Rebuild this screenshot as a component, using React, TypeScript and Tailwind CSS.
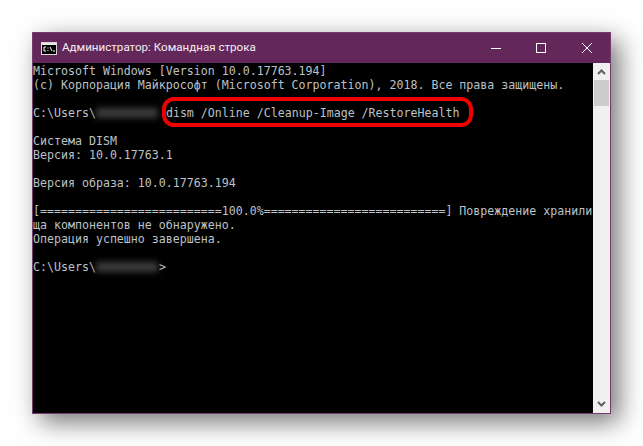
const mono = 'font-["DejaVu_Sans_Mono",monospace] text-[11.62px] leading-[14px]';

function Blur({ chars }: { chars: number }) {
  return (
    <span className={chars === 10 ? 'inline-flex w-[70px] h-[14px] items-center' : 'inline-flex w-[63px] h-[14px] items-center'}>
      <span className="block w-[62px] h-[10px] bg-[#3c3c3c] blur-[3px]" />
    </span>
  );
}

function Line({ children }: { children?: React.ReactNode }) {
  return <div className="h-[14px] whitespace-pre flex items-center">{children}</div>;
}

export default function App() {
  return (
    <div className="w-[643px] h-[446px] bg-white pt-[32px] pl-[32px] overflow-hidden">
      <div className="relative w-[579px] h-[382px] border border-[#733c6c] bg-[#632759] flex flex-col shadow-[8px_8px_24px_rgba(0,0,0,0.55)]">
        <div className="h-[30px] flex items-center text-white shrink-0">
          <svg width="16" height="13" viewBox="0 0 16 13" className="ml-[8px] mr-[5px]">
            <rect x="0.5" y="0.5" width="15" height="12" fill="#000" stroke="#d8d8d8" />
            <rect x="1" y="1" width="14" height="2" fill="#e8e8e8" />
            <path d="M5 5H3v4h2M7 5.5v1M7 8v1M9 5l2 4M12 9h2" stroke="#fff" fill="none" />
          </svg>
          <span className='font-["Roboto",sans-serif] text-[11.6px] text-[#f4eff3]'>Администратор: Командная строка</span>
          <div className="ml-auto flex items-center h-full">
            <svg width="10" height="10" viewBox="0 0 10 10" className="mr-[35px]">
              <path d="M0 5.5H10" stroke="#fff" />
            </svg>
            <svg width="10" height="10" viewBox="0 0 10 10" className="mr-[36px]">
              <rect x="0.5" y="0.5" width="9" height="9" fill="none" stroke="#fff" />
            </svg>
            <svg width="10" height="10" viewBox="0 0 10 10" className="mr-[18px]">
              <path d="M0 0L10 10M10 0L0 10" stroke="#fff" />
            </svg>
          </div>
        </div>
        <div className="flex flex-1 min-h-0">
          <div className={`flex-1 bg-black text-[#bcc2c8] pt-[1px] ${mono}`}>
            <Line>Microsoft Windows [Version 10.0.17763.194]</Line>
            <Line>(c) Корпорация Майкрософт (Microsoft Corporation), 2018. Все права защищены.</Line>
            <Line />
            <Line>
              C:\Users\<Blur chars={10} />dism /Online /Cleanup-Image /RestoreHealth
            </Line>
            <Line />
            <Line>Система DISM</Line>
            <Line>Версия: 10.0.17763.1</Line>
            <Line />
            <Line>Версия образа: 10.0.17763.194</Line>
            <Line />
            <Line>[==========================100.0%==========================] Повреждение хранили</Line>
            <Line>ща компонентов не обнаружено.</Line>
            <Line>Операция успешно завершена.</Line>
            <Line />
            <Line>
              C:\Users\<Blur chars={9} />&gt;
            </Line>
          </div>
          <div className="w-[17px] bg-[#f0f0f0] flex flex-col items-center shrink-0">
            <svg width="9" height="6" viewBox="0 0 9 6" className="mt-[6px]">
              <path d="M1 5L4.5 1.5L8 5" stroke="#606060" strokeWidth="2" fill="none" />
            </svg>
            <div className="w-[15px] h-[26px] bg-[#cdcdcd] mt-[5px]" />
            <svg width="9" height="6" viewBox="0 0 9 6" className="mt-auto mb-[6px]">
              <path d="M1 1L4.5 4.5L8 1" stroke="#606060" strokeWidth="2" fill="none" />
            </svg>
          </div>
        </div>
        <div className="absolute left-[129px] top-[64px] w-[311px] h-[30px] border-[4px] border-[#f00000] rounded-[12px]" />
      </div>
    </div>
  );
}
